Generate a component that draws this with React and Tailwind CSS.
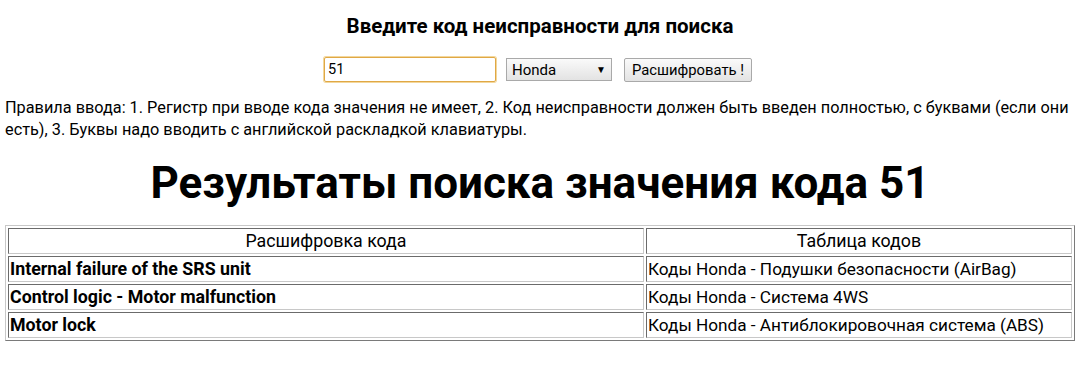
import React, { useState } from 'react';

// Результаты поиска
const rows = [
  { name: 'Internal failure of the SRS unit', table: 'Коды Honda - Подушки безопасности (AirBag)' },
  { name: 'Control logic - Motor malfunction', table: 'Коды Honda - Система 4WS' },
  { name: 'Motor lock', table: 'Коды Honda - Антиблокировочная система (ABS)' }
];

const cellClass =
  'border border-t-[#6b6b6b] border-l-[#6b6b6b] border-b-[#c8c8c8] border-r-[#c8c8c8] px-[1px] py-[1px] leading-[22px]';

export default function App() {
  const [code, setCode] = useState('51');
  const [brand, setBrand] = useState('Honda');

  return (
    <div className="px-[5px] bg-white text-black font-['Roboto',sans-serif] text-[16px]">
      {/* Форма поиска */}
      <h3 className="pt-[14px] text-center text-[20.5px] font-bold leading-[24px]">
        Введите код неисправности для поиска
      </h3>

      <div className="mt-[19px] flex items-center justify-center">
        <input
          value={code}
          onChange={(e) => setCode(e.target.value)}
          className="ml-[-4px] w-[172px] h-[25px] px-[3px] text-[14.5px] border border-[#e0a845] rounded-[2px] shadow-[0_0_0_1px_#f3d79c] outline-none"
        />
        <div className="relative ml-[10px]">
          <select
            value={brand}
            onChange={(e) => setBrand(e.target.value)}
            className="appearance-none w-[106px] h-[23px] pl-[5px] text-[15px] border border-[#a9a9a9] bg-gradient-to-b from-[#fafafa] to-[#e3e3e3] outline-none"
          >
            <option>Honda</option>
            <option>Toyota</option>
            <option>Nissan</option>
          </select>
          <span className="pointer-events-none absolute right-[6px] top-[4px] text-[10px] leading-[15px]">▼</span>
        </div>
        <button className="ml-[12px] w-[128px] h-[24px] text-[14.8px] border border-[#a9a9a9] rounded-[2px] bg-gradient-to-b from-[#fafafa] to-[#e3e3e3]">
          Расшифровать !
        </button>
      </div>

      <p className="mt-[15px] text-[16.3px] leading-[22px]">
        Правила ввода: 1. Регистр при вводе кода значения не имеет, 2. Код неисправности должен быть введен полностью, с буквами (если они есть), 3. Буквы надо вводить с английской раскладкой клавиатуры.
      </p>

      <h1 className="mt-[16px] text-center text-[44px] font-bold leading-[52px]">
        Результаты поиска значения кода 51
      </h1>

      <table className="mt-[16px] w-full border-separate border-spacing-[2px] border border-t-[#c8c8c8] border-l-[#c8c8c8] border-b-[#7a7a7a] border-r-[#7a7a7a]">
        <thead>
          <tr>
            <th className={`${cellClass} w-[636px] text-[17.8px] font-normal text-center`}>Расшифровка кода</th>
            <th className={`${cellClass} text-[17.8px] font-normal text-center`}>Таблица кодов</th>
          </tr>
        </thead>
        <tbody>
          {rows.map((r) => (
            <tr key={r.name}>
              <td className={`${cellClass} text-[17.8px] font-bold`}>{r.name}</td>
              <td className={`${cellClass} text-[17.2px]`}>{r.table}</td>
            </tr>
          ))}
        </tbody>
      </table>
    </div>
  );
}
